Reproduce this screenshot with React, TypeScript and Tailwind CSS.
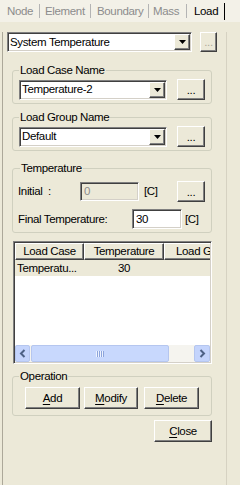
import React from "react";

const sunken =
  "border border-t-[#808080] border-l-[#808080] border-b-white border-r-white shadow-[inset_1px_1px_0_#404040,inset_-1px_-1px_0_#d4d0c8]";
const raised =
  "border border-t-white border-l-white border-b-[#404040] border-r-[#404040] shadow-[inset_-1px_-1px_0_#808080] bg-[#ece9d8]";
const groupBox = "rounded-[3px] border border-[#d0d0bf]";
const scrollButton =
  "flex h-full items-center justify-center rounded-[2px] border border-[#b5c6ef] bg-[#c4d4fc]";

const Combo = ({ value, width }: { value: string; width: string }) => (
  <div className={`${width} flex h-[20px] items-center bg-white ${sunken}`}>
    <span className="flex-1 truncate pl-[2px]">{value}</span>
    <span className={`mr-[1px] flex h-[16px] w-[16px] items-center justify-center ${raised}`}>
      <svg width="7" height="4" viewBox="0 0 7 4">
        <path d="M0 0h7L3.5 4z" fill="#000" />
      </svg>
    </span>
  </div>
);

const DotsButton = ({ disabled = false }: { disabled?: boolean }) => (
  <button
    type="button"
    className={`flex items-end justify-center pb-[3px] leading-none ${raised} ${
      disabled ? "h-[20px] w-[17px] text-[#aca899]" : "h-[21px] w-[28px] text-black"
    }`}
  >
    ...
  </button>
);

const PushButton = ({
  mnemonic,
  rest,
  width,
}: {
  mnemonic: string;
  rest: string;
  width: string;
}) => (
  <button type="button" className={`${width} h-[22px] text-center ${raised}`}>
    <span className="underline underline-offset-[2px]">{mnemonic}</span>
    {rest}
  </button>
);

const tabs = [
  { label: "Node", cell: "w-[39px] pl-[7px]" },
  { label: "Element", cell: "w-[50px] pl-[5px]" },
  { label: "Boundary", cell: "w-[57px] pl-[6px]" },
  { label: "Mass", cell: "w-[37px] pl-[4px]" },
];

const App = () => {
  return (
    <div className="h-[485px] w-[240px] overflow-hidden bg-[#ece9d8] font-['Liberation_Sans',Arial,sans-serif] text-[11.5px] leading-[13px] tracking-[-0.35px] text-black">
      {/* tab strip */}
      <div className="flex h-[22px] items-center bg-[#f3f1e8] text-[#8c8c8c]">
        {tabs.map((tab) => (
          <React.Fragment key={tab.label}>
            <span className={tab.cell}>{tab.label}</span>
            <span className="h-[14px] w-px bg-[#b4b4b4]" />
          </React.Fragment>
        ))}
        <span className="flex h-full w-[37px] items-center pl-[7px] text-black">Load</span>
        <span className="h-[17px] w-px bg-black" />
      </div>

      <div className="ml-[2px] h-[463px] w-[225px] border-b border-l border-r border-b-[#aca899] border-l-[#aca899] border-r-[#d6d2c2]">
        <div className="ml-[4px] mt-[10px] flex items-center">
          <Combo value="System Temperature" width="w-[185px]" />
          <div className="ml-[8px]">
            <DotsButton disabled />
          </div>
        </div>

        <fieldset className={`ml-[9px] mt-[12px] w-[200px] ${groupBox}`}>
          <legend className="ml-[6px] px-[1px]">Load Case Name</legend>
          <div className="flex items-center pb-[3px] pl-[6px] pt-[2px]">
            <Combo value="Temperature-2" width="w-[148px]" />
            <div className="ml-[10px]">
              <DotsButton />
            </div>
          </div>
        </fieldset>

        <fieldset className={`ml-[9px] mt-[7px] w-[200px] ${groupBox}`}>
          <legend className="ml-[6px] px-[1px]">Load Group Name</legend>
          <div className="flex items-center pb-[3px] pl-[6px] pt-[2px]">
            <Combo value="Default" width="w-[148px]" />
            <div className="ml-[10px]">
              <DotsButton />
            </div>
          </div>
        </fieldset>

        <fieldset className={`ml-[9px] mt-[11px] w-[200px] ${groupBox}`}>
          <legend className="ml-[7px] px-[1px]">Temperature</legend>
          <div className="pb-[3px] pl-[5px] pt-[6px]">
            <div className="flex h-[21px] items-center">
              <span className="w-[62px]">Initial &nbsp;:</span>
              <div className={`flex h-[19px] w-[59px] items-center pl-[3px] text-[#8c8c8c] ${sunken}`}>
                0
              </div>
              <span className="ml-[5px] w-[33px]">[C]</span>
              <DotsButton />
            </div>
            <div className="mt-[7px] flex h-[20px] items-center">
              <span className="w-[114px]">Final Temperature:</span>
              <div className={`flex h-[20px] w-[50px] items-center bg-white pl-[3px] ${sunken}`}>
                30
              </div>
              <span className="ml-[3px]">[C]</span>
            </div>
          </div>
        </fieldset>

        {/* list view */}
        <div className={`ml-[10px] mt-[8px] h-[123px] w-[199px] p-[1px] ${sunken}`}>
          <div className="flex h-full flex-col overflow-hidden bg-white">
            <div className="flex h-[17px] shrink-0">
              <div className={`flex w-[69px] shrink-0 items-center justify-center ${raised}`}>
                Load Case
              </div>
              <div className={`flex w-[80px] shrink-0 items-center justify-center ${raised}`}>
                Temperature
              </div>
              <div className={`flex w-[70px] shrink-0 items-center pl-[11px] ${raised}`}>
                Load Gr
              </div>
            </div>
            <div className="flex h-[16px] shrink-0 items-center bg-[#ece9d8]">
              <span className="w-[69px] pl-[2px]">Temperatu...</span>
              <span className="w-[80px] text-center">30</span>
            </div>
            <div className="flex-1" />
            <div className="flex h-[17px] shrink-0 bg-[#f5f4ef]">
              <div className={`w-[15px] ${scrollButton}`}>
                <svg width="8" height="9" viewBox="0 0 8 9">
                  <path d="M5.5 1L2 4.5 5.5 8" stroke="#4d6185" strokeWidth="2" fill="none" />
                </svg>
              </div>
              <div className={`ml-[1px] w-[138px] ${scrollButton} bg-[#c8d8fd]`}>
                <svg width="8" height="6" viewBox="0 0 8 6">
                  <path d="M0.5 0v6M2.5 0v6M4.5 0v6M6.5 0v6" stroke="#eef3fe" strokeWidth="1" />
                  <path d="M1.5 0v6M3.5 0v6M5.5 0v6M7.5 0v6" stroke="#8ca4dc" strokeWidth="1" />
                </svg>
              </div>
              <div className="flex-1" />
              <div className={`w-[16px] ${scrollButton}`}>
                <svg width="8" height="9" viewBox="0 0 8 9">
                  <path d="M2.5 1L6 4.5 2.5 8" stroke="#4d6185" strokeWidth="2" fill="none" />
                </svg>
              </div>
            </div>
          </div>
        </div>

        <fieldset className={`ml-[9px] mt-[6px] w-[200px] ${groupBox}`}>
          <legend className="ml-[6px] px-[1px]">Operation</legend>
          <div className="flex pb-[6px] pl-[12px] pt-[4px]">
            <PushButton mnemonic="A" rest="dd" width="w-[55px]" />
            <div className="ml-[4px]">
              <PushButton mnemonic="M" rest="odify" width="w-[54px]" />
            </div>
            <div className="ml-[6px]">
              <PushButton mnemonic="D" rest="elete" width="w-[55px]" />
            </div>
          </div>
        </fieldset>

        <div className="ml-[151px] mt-[4px]">
          <PushButton mnemonic="C" rest="lose" width="w-[58px]" />
        </div>
      </div>
    </div>
  );
};

export default App;
